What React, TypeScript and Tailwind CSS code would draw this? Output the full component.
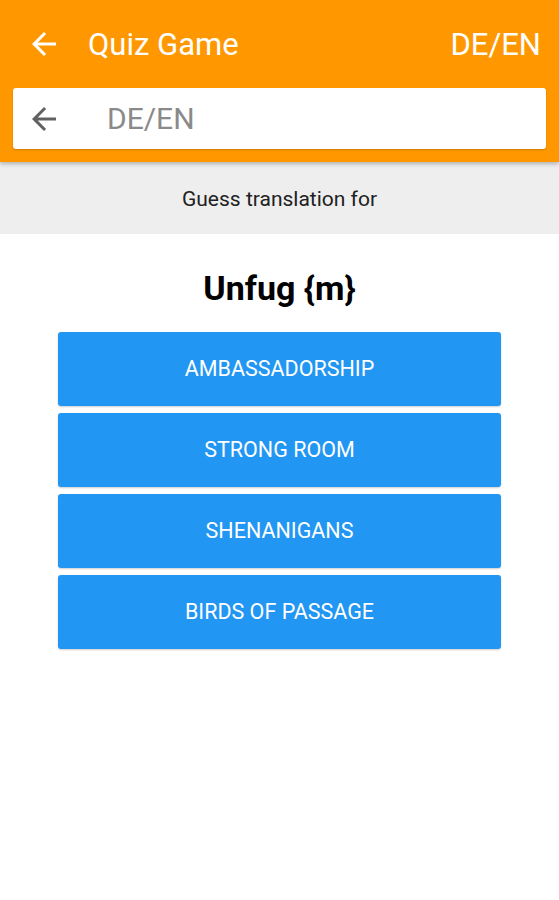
import React from "react";

const Arrow = ({ className }: { className?: string }) => (
  <svg viewBox="0 0 24 24" className={className} fill="currentColor">
    <path d="M20 11H7.83l5.59-5.59L12 4l-8 8 8 8 1.41-1.41L7.83 13H20v-2z" />
  </svg>
);

export default function App() {
  const answers = ["AMBASSADORSHIP", "STRONG ROOM", "SHENANIGANS", "BIRDS OF PASSAGE"];
  return (
    <div className="w-[559px] h-[900px] bg-white flex flex-col" style={{ fontFamily: "Roboto, 'Noto Sans', sans-serif" }}>
      <div className="bg-[#ff9800] h-[162px] flex flex-col shadow-[0_2px_4px_rgba(0,0,0,0.25)] relative z-10">
        <div className="h-[88px] flex items-center pl-[26px] pr-[18px] text-white">
          <Arrow className="w-[36px] h-[36px]" />
          <span className="ml-[26px] text-[31px] leading-none">Quiz Game</span>
          <span className="ml-auto text-[31px] leading-none">DE/EN</span>
        </div>
        <div className="mx-[13px] h-[61px] bg-white rounded-[3px] flex items-center pl-[13px] shadow-[0_1px_2px_rgba(0,0,0,0.2)]">
          <Arrow className="w-[36px] h-[36px] text-[#616161]" />
          <span className="ml-[45px] text-[30px] leading-none text-[#8a8a8a]">DE/EN</span>
        </div>
      </div>
      <div className="bg-[#eeeeee] h-[72px] flex items-center justify-center pt-[4px] text-[21px] text-[#212121]">
        Guess translation for
      </div>
      <div className="flex flex-col items-center">
        <div className="mt-[34px] text-[34px] font-bold text-black leading-none h-[40px] flex items-center">Unfug {"{m}"}</div>
        <div className="mt-[24px] w-[443px] flex flex-col gap-[7px]">
          {answers.map((a) => (
            <div key={a} className="h-[74px] bg-[#2196f3] rounded-[3px] flex items-center justify-center text-white text-[21.5px] shadow-[0_1px_2px_rgba(0,0,0,0.2)]">
              {a}
            </div>
          ))}
        </div>
      </div>
    </div>
  );
}
